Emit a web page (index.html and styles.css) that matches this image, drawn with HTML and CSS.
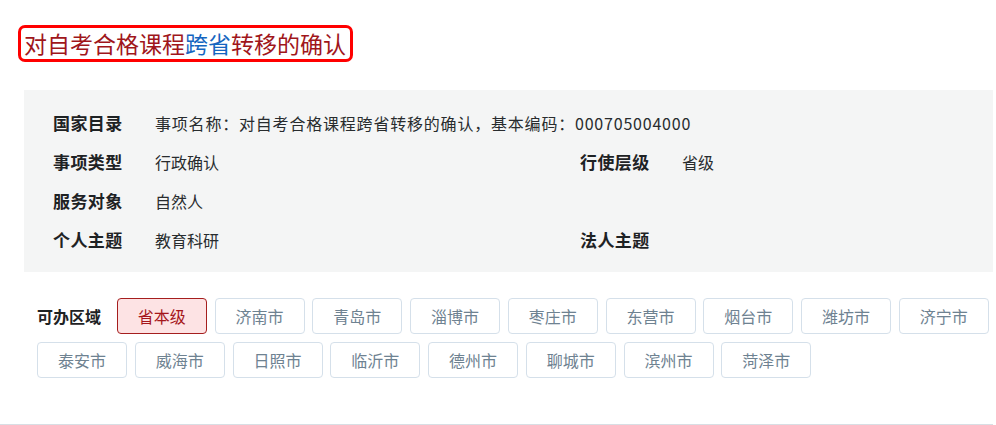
FILE: index.html
```html
<!DOCTYPE html>
<html>

<head>
    <meta charset="utf-8">
    <link rel="stylesheet" href="styles.css">
</head>

<body>
    <div class="page">
        <div class="title">对自考合格课程<span class="title-blue">跨省</span>转移的确认</div>

        <div class="info">
            <div class="label">国家目录</div>
            <div class="value wide">事项名称：对自考合格课程跨省转移的确认，基本编码：000705004000</div>

            <div class="label">事项类型</div>
            <div class="value">行政确认</div>
            <div class="label">行使层级</div>
            <div class="value">省级</div>

            <div class="label">服务对象</div>
            <div class="value">自然人</div>
            <div class="label"></div>
            <div class="value"></div>

            <div class="label">个人主题</div>
            <div class="value">教育科研</div>
            <div class="label">法人主题</div>
            <div class="value"></div>
        </div>

        <div class="area">
            <div class="area-label">可办区域</div>
            <button class="city active">省本级</button>
            <button class="city">济南市</button>
            <button class="city">青岛市</button>
            <button class="city">淄博市</button>
            <button class="city">枣庄市</button>
            <button class="city">东营市</button>
            <button class="city">烟台市</button>
            <button class="city">潍坊市</button>
            <button class="city">济宁市</button>
            <button class="city">泰安市</button>
            <button class="city">威海市</button>
            <button class="city">日照市</button>
            <button class="city">临沂市</button>
            <button class="city">德州市</button>
            <button class="city">聊城市</button>
            <button class="city">滨州市</button>
            <button class="city">菏泽市</button>
        </div>

        <div class="divider"></div>
    </div>
</body>

</html>
```

FILE: styles.css
```css
body {
    margin: 0;
    background-color: white;
    font-family: "Noto Sans CJK SC", "Noto Sans", sans-serif;
}

.page {
    width: 993px;
}

.title {
    display: inline-block;
    margin-top: 25px;
    margin-left: 18px;
    padding: 0 4px 0 3px;
    border: 3px solid rgb(255, 0, 0);
    border-radius: 7px;
    font-size: 23px;
    line-height: 31px;
    color: rgb(160, 22, 27);
}

.title-blue {
    color: rgb(21, 101, 192);
}

.info {
    display: grid;
    grid-template-columns: 102px 425px 102px 1fr;
    grid-auto-rows: 39px;
    align-items: center;
    margin-top: 28px;
    margin-left: 24px;
    padding: 13px 0 13px 29px;
    background-color: rgb(244, 245, 245);
}

.label {
    font-size: 17px;
    font-weight: bold;
    letter-spacing: 0.4px;
    color: rgb(30, 34, 36);
}

.value {
    font-size: 16px;
    color: rgb(40, 44, 46);
}

.wide {
    grid-column: 2 / 5;
    letter-spacing: 0.8px;
}

.area {
    display: flex;
    flex-wrap: wrap;
    gap: 8px 7.75px;
    margin-top: 26px;
    padding-left: 37px;
}

.area-label {
    width: 72px;
    height: 36px;
    line-height: 36px;
    font-size: 16px;
    font-weight: bold;
    color: rgb(30, 34, 36);
}

.city {
    width: 90px;
    height: 36px;
    padding: 0;
    border: 1px solid rgb(213, 224, 234);
    border-radius: 4px;
    background-color: white;
    font-family: "Noto Sans CJK SC", "Noto Sans", sans-serif;
    font-size: 16px;
    color: rgb(110, 130, 145);
}

.active {
    border-color: rgb(165, 30, 30);
    background-color: rgb(253, 227, 228);
    color: rgb(165, 22, 27);
}

.divider {
    margin-top: 46px;
    height: 2px;
    background-color: rgb(216, 222, 228);
}
```
